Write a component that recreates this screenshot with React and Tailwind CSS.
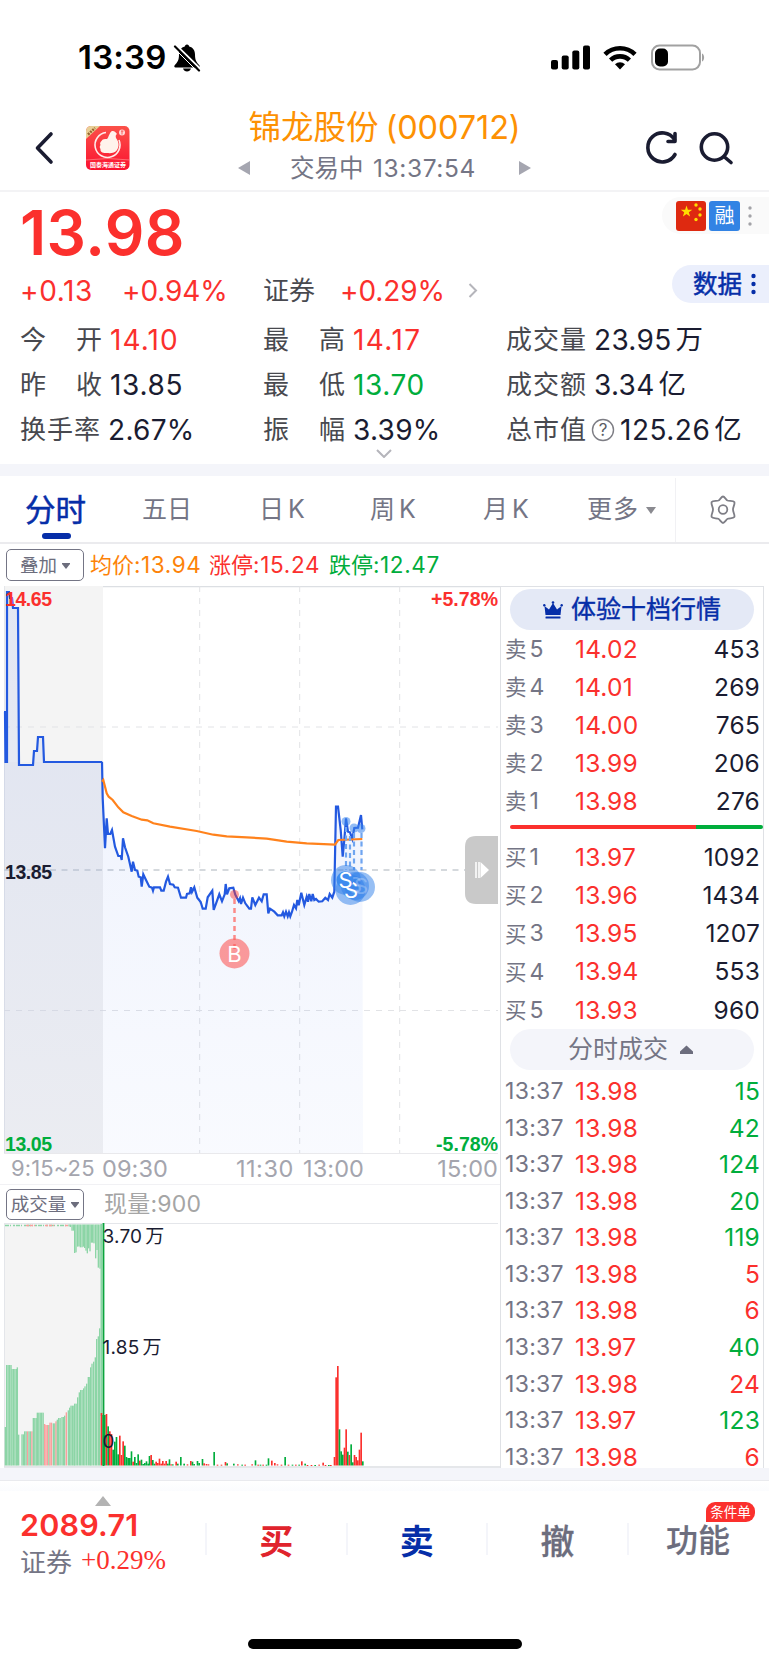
import React from 'react';

const asks = [
  ['卖', 5, '14.02', 453],
  ['卖', 4, '14.01', 269],
  ['卖', 3, '14.00', 765],
  ['卖', 2, '13.99', 206],
  ['卖', 1, '13.98', 276],
];

const bids = [
  ['买', 1, '13.97', 1092],
  ['买', 2, '13.96', 1434],
  ['买', 3, '13.95', 1207],
  ['买', 4, '13.94', 553],
  ['买', 5, '13.93', 960],
];

const trades = [
  ['13.98', 15, 'g'], ['13.98', 42, 'g'], ['13.98', 124, 'g'], ['13.98', 20, 'g'],
  ['13.98', 119, 'g'], ['13.98', 5, 'r'], ['13.98', 6, 'r'], ['13.97', 40, 'g'],
  ['13.98', 24, 'r'], ['13.97', 123, 'g'], ['13.98', 6, 'r'],
];

// price line, chart coordinates
const auctionLine = '4,126 5,126 5.5,176 7,176 7,6 9,6 10,12 12,12 13,22 18,22 19,179 33,179 34,165 37,165 38,151 43,151 44,176 102,176';

// intraday points are kept at 3x, offset from (90, 174)
const priceRaw = [
  [36, 5], [38, 115], [45, 265], [50, 175], [54, 222], [61, 222], [66, 210], [75, 260], [85, 288], [92, 288], [95, 300],
  [99, 235], [105, 262], [115, 290], [125, 335], [129, 305], [135, 330], [142, 332], [146, 350], [152, 352], [155, 380],
  [160, 343], [168, 360], [178, 380], [186, 383], [189, 392], [192, 382], [210, 382], [214, 392], [221, 392], [228, 365],
  [234, 350], [240, 372], [250, 374], [254, 382], [264, 383], [273, 413], [288, 413], [291, 402], [299, 400], [303, 382],
  [306, 396], [313, 382], [322, 413], [332, 426], [338, 446], [347, 446], [353, 412], [367, 392], [371, 450], [380, 425],
  [388, 403], [396, 424], [404, 403], [407, 372], [411, 403], [418, 385], [430, 383], [436, 404], [446, 424], [450, 415],
  [453, 432], [459, 413], [466, 430], [478, 446], [483, 446], [487, 412], [496, 435], [507, 413], [515, 424], [521, 403],
  [530, 403], [535, 460], [540, 446], [553, 455], [563, 466], [575, 466], [579, 457], [583, 469], [588, 455], [593, 469],
  [597, 457], [601, 469], [606, 455], [612, 435], [618, 445], [622, 420], [626, 436], [634, 398], [643, 435], [650, 410],
  [654, 425], [658, 402], [664, 424], [668, 402], [673, 420], [678, 417], [686, 425], [697, 424], [706, 413], [714, 420],
  [719, 402], [727, 413], [733, 395], [738, 140], [744, 140], [752, 210], [758, 290], [763, 240], [768, 175], [774, 215],
  [780, 217], [787, 237], [793, 204], [804, 203], [813, 165], [817, 208],
];

const avgRaw = [
  [36, 65], [40, 60], [50, 100], [56, 110], [68, 120], [85, 142], [100, 157], [125, 168], [155, 179], [172, 181], [190, 190],
  [240, 200], [320, 213], [370, 224], [410, 229], [470, 232], [530, 236], [590, 245], [650, 250], [735, 254], [745, 240], [817, 237],
];

const toPoints = (raw) => raw.map(([x, y]) => `${(90 + x / 3).toFixed(1)},${(174 + y / 3).toFixed(1)}`).join(' ');
const priceLine = `${auctionLine} ${toPoints(priceRaw)}`;

// auction volume: [from, to, top] at 3x
const auctionSteps = [
  [14, 18, 654], [18, 34, 468], [34, 50, 480], [50, 54, 475], [54, 58, 677], [64, 72, 676], [72, 98, 667], [98, 110, 627],
  [110, 130, 611], [132, 136, 645], [136, 148, 648], [148, 158, 641], [158, 166, 643], [166, 170, 637], [170, 174, 632],
  [174, 184, 627], [184, 192, 624], [192, 197, 620], [197, 203, 610], [203, 207, 604], [207, 211, 596], [211, 222, 590],
  [222, 231, 584], [231, 236, 565], [236, 240, 550], [240, 249, 543], [249, 253, 538], [253, 258, 532], [258, 263, 524],
  [263, 270, 504], [270, 274, 475], [274, 279, 464], [279, 284, 458], [284, 288, 445], [288, 293, 390], [293, 297, 382], [297, 302, 358],
];
const redAuction = [[78, 83], [93, 98], [132, 145], [148, 154], [166, 170], [197, 203]];

const auctionTop = [
  [205, 52], [209, 54], [214, 65], [218, 65], [222, 132], [226, 130], [231, 113], [235, 112], [239, 115], [244, 115], [248, 113],
  [252, 117], [256, 125], [260, 133], [264, 118], [268, 127], [272, 101], [276, 101], [280, 103], [285, 148], [289, 123], [293, 176], [298, 179],
];

// intraday volume: [x, top, color] at 3x
const volume = [
  [302, 612, 'r'], [307, 618, 'g'], [312, 618, 'g'], [317, 615, 'r'], [322, 652, 'g'], [327, 667, 'r'], [332, 675, 'r'], [337, 722, 'g'],
  [342, 698, 'g'], [347, 684, 'g'], [352, 736, 'g'], [357, 680, 'r'], [362, 738, 'r'], [367, 697, 'r'], [372, 710, 'g'], [377, 744, 'g'],
  [382, 747, 'g'], [387, 747, 'g'], [392, 727, 'g'], [397, 758, 'r'], [402, 744, 'g'], [407, 762, 'g'], [412, 736, 'g'], [417, 755, 'r'],
  [422, 752, 'g'], [427, 765, 'g'], [432, 762, 'g'], [437, 757, 'g'], [442, 764, 'g'], [446, 741, 'g'], [451, 738, 'r'], [456, 753, 'g'],
  [461, 764, 'g'], [466, 758, 'r'], [471, 762, 'r'], [476, 749, 'r'], [481, 764, 'r'], [486, 756, 'r'], [491, 764, 'r'], [496, 756, 'r'],
  [501, 764, 'g'], [506, 751, 'g'], [511, 766, 'r'], [516, 766, 'g'], [526, 758, 'r'], [531, 764, 'g'], [540, 744, 'g'], [550, 764, 'g'],
  [560, 766, 'r'], [570, 756, 'r'], [575, 758, 'g'], [580, 765, 'g'], [590, 756, 'g'], [595, 762, 'g'], [605, 750, 'g'], [610, 763, 'r'],
  [617, 765, 'r'], [623, 766, 'r'], [640, 729, 'g'], [650, 767, 'r'], [662, 767, 'r'], [674, 759, 'r'], [679, 763, 'g'], [699, 764, 'g'],
  [711, 766, 'r'], [724, 767, 'g'], [733, 767, 'r'], [754, 766, 'r'], [764, 754, 'g'], [772, 767, 'r'], [779, 767, 'g'], [787, 767, 'r'],
  [797, 767, 'g'], [803, 748, 'g'], [813, 755, 'r'], [822, 762, 'r'], [830, 766, 'r'], [842, 767, 'r'], [853, 744, 'g'], [863, 767, 'r'],
  [875, 767, 'g'], [885, 767, 'r'], [895, 767, 'g'], [903, 757, 'r'], [913, 764, 'g'], [920, 768, 'r'], [932, 768, 'r'], [943, 768, 'g'],
  [955, 767, 'r'], [967, 761, 'r'], [974, 768, 'r'], [984, 768, 'g'], [990, 768, 'r'], [1001, 744, 'r'], [1006, 505, 'r'], [1011, 471, 'r'],
  [1016, 661, 'g'], [1021, 727, 'g'], [1026, 737, 'g'], [1031, 716, 'r'], [1036, 661, 'r'], [1041, 728, 'g'], [1046, 738, 'r'],
  [1051, 706, 'g'], [1056, 760, 'g'], [1061, 738, 'r'], [1066, 744, 'r'], [1071, 754, 'r'], [1076, 722, 'r'], [1081, 671, 'r'], [1086, 757, 'g'],
];

const RED = '#fb302d';
const GREEN = '#00ad3c';

const auctionBars = [];
auctionSteps.forEach(([from, to, top]) => {
  for (let x = from; x < to - 2; x += 4.35) {
    const red = redAuction.some(([a, b]) => x >= a - 1 && x < b - 1);
    auctionBars.push({ x: x / 3, y: (top - 42) / 3, red });
  }
});

const StatusBar = () => (
  <div className="flex h-[100px] items-start pl-[78px] pr-[64px] pt-[44px]">
    <span className="w-[95px] text-[33px] font-semibold leading-[27px] tracking-[0.200px]">13:39</span>
    <svg className="h-[28px] w-[28px]" viewBox="0 0 28 28">
      <path d="M14 0.5c1.500 0 2 1 2.200 2 4 1 5.800 4 5.800 8 0 6 1.500 7.500 4.500 11 .6 1-.1 2-1 2H2.500c-1 0-1.500-1-1-2C4.500 18 6 16.500 6 10.500c0-4 2-7 5.800-8 .2-1 .7-2 2.200-2z" />
      <path d="M10 24.500h8c-.6 2-2.200 3-4 3s-3.400-1-4-3z" />
      <path d="M2.500 0.500L27 24.500" stroke="#fff" strokeWidth="2" />
      <path d="M2 2.500L26 26.500" stroke="#000" strokeWidth="2.200" strokeLinecap="round" />
      <path d="M0.500 3.500L24 27" stroke="#fff" strokeWidth="1" />
    </svg>
    <div className="ml-auto flex h-[27px] items-center">
      <svg className="h-[25px] w-[39px]" viewBox="0 0 39 25">
        <rect x="0" y="15" width="7" height="9.500" rx="2" />
        <rect x="10.700" y="10.500" width="7" height="14" rx="2" />
        <rect x="21.300" y="5.500" width="7" height="19" rx="2" />
        <rect x="32" y="0.500" width="7" height="24" rx="2" />
      </svg>
      <svg className="ml-[13px] h-[25px] w-[34px]" viewBox="0 0 34 25" fill="none" stroke="#000" strokeWidth="4.600">
        <path d="M2 9.300a21.500 21.500 0 0 1 30 0" />
        <path d="M7.600 15.200a13.500 13.500 0 0 1 18.800 0" />
        <path d="M17 24.500l-5-5.200a7.300 7.300 0 0 1 10 0z" fill="#000" stroke="none" />
      </svg>
      <svg className="ml-[14px] h-[27px] w-[54px]" viewBox="0 0 54 27">
        <rect x="1" y="1.500" width="48" height="24" rx="7.500" fill="none" stroke="#a1a1a1" strokeWidth="2" />
        <rect x="4" y="4.500" width="13" height="18" rx="5" />
        <path d="M51 9.500c2.800.8 2.800 7.200 0 8z" fill="#a1a1a1" />
      </svg>
    </div>
  </div>
);

const Header = () => (
  <div className="flex h-[92px] border-b-2 border-[#f3f3f5]">
    <svg className="ml-[34px] mt-[31px] h-[34px] w-[20px]" viewBox="0 0 20 34" fill="none" stroke="#1a1c31" strokeWidth="3.600" strokeLinecap="round" strokeLinejoin="round">
      <path d="M17 3L3.500 17L17 31" />
    </svg>
    <svg className="ml-[32px] mt-[26px] h-[44px] w-[44px]" viewBox="0 0 44 44">
      <defs>
        <linearGradient id="logo" x1="0" y1="0" x2="0" y2="1">
          <stop offset="0" stopColor="#fb5149" />
          <stop offset="1" stopColor="#fb1230" />
        </linearGradient>
        <clipPath id="logoClip"><rect width="43.500" height="44" rx="5" /></clipPath>
      </defs>
      <g clipPath="url(#logoClip)">
        <rect width="44" height="44" fill="url(#logo)" />
        <path d="M0 0h14L0 13z" fill="#e9cf96" />
        <path d="M2 8.500L9 2" stroke="#94632c" strokeWidth="2.500" strokeDasharray="2 1" />
        <path d="M20 6.500A12.500 12.500 0 1 0 33 14" fill="none" stroke="#ffeceb" strokeWidth="1.600" />
        <path d="M21 13c2-2 2-6 5-8 2-.5 4 1 5 3-1.500 1-1.500 2-1 4 3 4 3.500 8 1 12-2 3-6 3.500-10 3-4 .5-7-1-6.500-4-1-1-1-3 0-4-1-2 0-3 1-4 1-2 3-2 5.500-2z" fill="#fff3ec" />
        <circle cx="36" cy="6.500" r="3" fill="#ffd9d7" />
        <path d="M35 5h2.500M36 5v3.500" stroke="#f8413f" strokeWidth="0.800" />
        <path d="M0 34Q22 31 44 34" fill="none" stroke="#ff8d8d" strokeWidth="0.700" />
        <text x="22" y="41" textAnchor="middle" fontSize="6" fontWeight="700" fill="#fff" textLength="36" className="font-['Noto_Sans_CJK_SC',sans-serif]">国泰海通证券</text>
      </g>
    </svg>
    <div className="ml-[108px] w-[293px]">
      <div className="mt-[10px] flex h-[36px] items-center justify-center whitespace-pre text-[32.500px] leading-[36px] text-[#fd9103]">
        <span>锦龙股份</span><span className="ml-[7px] tracking-[-0.100px]">(000712)</span>
      </div>
      <div className="mt-[7px] flex h-[30px] items-center text-[24.500px] leading-[30px] text-[#747585]">
        <svg className="h-[14px] w-[12px]" viewBox="0 0 12 14"><path d="M12 0v14L0 7z" fill="#a5a6b0" /></svg>
        <span className="ml-[40px] w-[83px]">交易中</span>
        <span className="w-[106px] tracking-[0.600px]">13:37:54</span>
        <svg className="ml-auto h-[14px] w-[12px]" viewBox="0 0 12 14"><path d="M0 0v14L12 7z" fill="#a5a6b0" /></svg>
      </div>
    </div>
    <svg className="ml-[112px] mt-[30px] h-[36px] w-[36px]" viewBox="0 0 36 36" fill="none" stroke="#1a1c31" strokeWidth="3.600" strokeLinecap="round" strokeLinejoin="round">
      <path d="M32 24.500A14.500 14.500 0 1 1 31.500 9.500" />
      <path d="M32 3.500v8h-7" />
    </svg>
    <svg className="ml-[20px] mt-[31px] h-[36px] w-[36px]" viewBox="0 0 36 36" fill="none" stroke="#1a1c31" strokeWidth="3.600" strokeLinecap="round">
      <circle cx="15.500" cy="16" r="13.200" />
      <path d="M25.500 26L32 31.500" />
    </svg>
  </div>
);

const Stat = ({ label, value, unit, color, spacing }) => (
  <div className="flex h-[45px] items-center text-[26px] text-[#48494f]">
    <span className={`flex justify-between ${label.length === 3 ? 'w-[80px]' : 'w-[82px]'}`}>
      {label.split('').map((c) => <span key={c}>{c}</span>)}
    </span>
    <span className={`ml-[8px] text-[28px] ${spacing || 'tracking-[0.300px]'} ${color || 'text-[#1a1c31]'}`}>{value}</span>
    {unit && <span className="ml-[4px] text-[27.500px] text-[#1a1c31]">{unit}</span>}
  </div>
);

const Quote = () => (
  <div className="relative h-[272px] pl-[20px]">
    <div className="h-[80px] pt-[9px] text-[62px] font-semibold leading-[64px] tracking-[0.400px] text-[#fb302d]">13.98</div>
    <div className="flex h-[37px] items-center text-[28px] text-[#fb302d]">
      <span className="w-[102px] tracking-[0.600px]">+0.13</span>
      <span className="w-[141px] tracking-[-0.100px]">+0.94%</span>
      <span className="w-[77px] text-[26px] text-[#48494f]">证券</span>
      <span className="w-[128px] tracking-[-0.100px]">+0.29%</span>
      <svg className="h-[15px] w-[10px]" viewBox="0 0 10 15" fill="none" stroke="#b5b5bb" strokeWidth="2"><path d="M1.500 1l6.500 6.500L1.500 14" /></svg>
    </div>
    <div className="grid grid-cols-[243px_243px_auto] pt-[8px]">
      <Stat label="今开" value="14.10" color="text-[#fb302d]" spacing="tracking-[1.100px]" />
      <Stat label="最高" value="14.17" color="text-[#fb302d]" spacing="tracking-[1.400px]" />
      <Stat label="成交量" value="23.95" unit="万" />
      <Stat label="昨收" value="13.85" spacing="tracking-[0.700px]" />
      <Stat label="最低" value="13.70" color="text-[#00ad3c]" spacing="tracking-[0.600px]" />
      <Stat label="成交额" value="3.34" unit="亿" />
      <Stat label="换手率" value="2.67%" />
      <Stat label="振幅" value="3.39%" />
      <div className="flex h-[45px] items-center text-[26px] text-[#48494f]">
        <span className="w-[85px] tracking-[1px]">总市值</span>
        <svg className="h-[24px] w-[24px]" viewBox="0 0 24 24">
          <circle cx="12" cy="12" r="10.500" fill="none" stroke="#7d7d84" strokeWidth="1.400" />
          <text x="12" y="18" textAnchor="middle" fontSize="17" fill="#5b5c64">?</text>
        </svg>
        <span className="ml-[5px] text-[28px] tracking-[0.500px] text-[#1a1c31]">125.26</span>
        <span className="ml-[4px] text-[27.500px] text-[#1a1c31]">亿</span>
      </div>
    </div>
    <svg className="absolute left-[376px] top-[257px] h-[9px] w-[16px]" viewBox="0 0 16 9" fill="none" stroke="#b5b5bb" strokeWidth="2"><path d="M1 1l7 7l7-7" /></svg>
    <div className="absolute right-0 top-[5px] flex h-[37px] w-[107px] items-center rounded-l-full bg-[#fafafa] pl-[14px]">
      <svg className="h-[30px] w-[30px]" viewBox="0 0 30 30">
        <rect width="30" height="30" rx="3" fill="#de2910" />
        <path d="M10.500 4.500l1.400 4.200h4.400l-3.500 2.600 1.300 4.200-3.600-2.600-3.600 2.600 1.300-4.200-3.500-2.600h4.400z" fill="#ffde00" />
        <g fill="#ffde00"><circle cx="20" cy="4" r="1.700" /><circle cx="24" cy="8" r="1.700" /><circle cx="24" cy="14" r="1.700" /><circle cx="20" cy="18.500" r="1.700" /></g>
      </svg>
      <span className="ml-[3px] flex h-[30px] w-[31px] items-center justify-center rounded-[3px] bg-[#3283e4] text-[20px] text-white">融</span>
      <svg className="ml-[8px] h-[22px] w-[4px]" viewBox="0 0 4 22" fill="#a3a3a8"><circle cx="2" cy="3" r="1.700" /><circle cx="2" cy="11" r="1.700" /><circle cx="2" cy="19" r="1.700" /></svg>
    </div>
    <div className="absolute right-0 top-[73px] flex h-[38px] w-[97px] items-center rounded-l-full bg-[#ebeffc] pl-[21px] text-[24.500px] text-[#062ea8] [-webkit-text-stroke:0.500px]">
      数据
      <svg className="ml-[9px] h-[22px] w-[5px]" viewBox="0 0 5 22"><g fill="#062ea8"><circle cx="2.500" cy="3" r="2.200" /><circle cx="2.500" cy="11" r="2.200" /><circle cx="2.500" cy="19" r="2.200" /></g></svg>
    </div>
  </div>
);

const Tabs = () => (
  <div className="flex h-[68px] items-center border-b-2 border-[#ebebee] pt-[2px] text-[25px] text-[#747585]">
    <div className="relative ml-[25px] w-[117px] text-[30.500px] text-[#062ea8] [-webkit-text-stroke:0.500px]">
      分时
      <span className="absolute -bottom-[6px] left-[17px] h-[6px] w-[29px] rounded-full bg-[#062ea8]" />
    </div>
    <span className="w-[117px]">五日</span>
    <span className="w-[111px]">日<span className="ml-[4px]">K</span></span>
    <span className="w-[113px]">周<span className="ml-[4px]">K</span></span>
    <span className="w-[104px]">月<span className="ml-[4px]">K</span></span>
    <span className="w-[59px] tracking-[1px]">更多</span>
    <svg className="h-[7px] w-[10px]" viewBox="0 0 10 7"><path d="M0 0h10L5 7z" fill="#8a8a90" /></svg>
    <div className="ml-[19px] h-full w-px bg-[#f1f1f4]" />
    <svg className="ml-[32px] h-[30px] w-[30px]" viewBox="0 0 30 30" fill="none" stroke="#7e7e86" strokeWidth="1.800" strokeLinejoin="round">
      <path d="M15 1.500c1.500 0 3 3.200 4.500 4 1.600.8 5.800 0 6.800 1.600 1 1.600-1.300 4.700-1.300 7.400s2.300 6 1.300 7.600c-1 1.600-5 .9-6.600 1.700-1.600.8-3.200 4.200-4.700 4.200s-3.100-3.400-4.700-4.200c-1.600-.8-5.600-.1-6.600-1.700-1-1.600 1.300-4.900 1.300-7.600s-2.300-5.800-1.300-7.400c1-1.600 5.200-.8 6.800-1.600 1.500-.8 3-4 4.500-4z" />
      <circle cx="15" cy="14.500" r="4.300" />
    </svg>
  </div>
);

const PriceChart = () => (
  <svg className="block h-[568px] w-[500px]" viewBox="0 0 500 568">
    <defs>
      <linearGradient id="area" x1="0" y1="0" x2="0" y2="1">
        <stop offset="0" stopColor="#2a5ce6" stopOpacity="0.090" />
        <stop offset="1" stopColor="#2a5ce6" stopOpacity="0.030" />
      </linearGradient>
    </defs>
    <rect x="4" y="0" width="99" height="567" fill="#f4f4f4" />
    <path d="M103 0.500H500" stroke="#dcdfe3" strokeWidth="1.500" />
    <path d="M4.500 0V568" stroke="#e4e6ea" />
    <path d="M4 567.500H498" stroke="#e9e9ec" />
    <g stroke="#e2e3e6" strokeDasharray="6 6">
      <path d="M199.700 0V567M299.700 0V567M399.700 0V567M4 141H498M4 424.500H498" />
    </g>
    <path d="M4 284H498" stroke="#d5d9dd" strokeWidth="2" strokeDasharray="6 5.500" />
    <polygon points={`${priceLine} 363,567 4,567`} fill="url(#area)" />
    <rect x="4" y="176" width="99" height="391" fill="#2a4a9a" opacity="0.015" />
    <polyline points={priceLine} fill="none" stroke="#2359e0" strokeWidth="2.200" />
    <polyline points={toPoints(avgRaw)} fill="none" stroke="#ff821c" strokeWidth="2.200" />

    <g className="font-['Liberation_Sans',sans-serif]" fontSize="19.500" fontWeight="700">
      <text x="5" y="19.500" fill={RED} textLength="47">14.65</text>
      <text x="498" y="19.500" fill={RED} textAnchor="end" textLength="67">+5.78%</text>
      <text x="5" y="293" fill="#1a1c31" textLength="47">13.85</text>
      <text x="5" y="564.500" fill={GREEN} textLength="47">13.05</text>
      <text x="498" y="564.500" fill={GREEN} textAnchor="end" textLength="62">-5.78%</text>
    </g>

    <circle cx="234.500" cy="308.500" r="4.500" fill="#fb302d" opacity="0.450" />
    <path d="M234.500 313V366" stroke="#fb8a88" strokeWidth="2.500" strokeDasharray="5 4" />
    <circle cx="234.500" cy="367.500" r="15" fill="#fb5a58" opacity="0.600" />
    <text x="234.500" y="375.500" fill="#fff" fontSize="22" textAnchor="middle">B</text>

    <g fill="#3a86ee" opacity="0.550">
      <circle cx="346" cy="235.500" r="4.500" />
      <circle cx="354" cy="242" r="4.500" />
      <circle cx="361" cy="242.500" r="4.500" />
    </g>
    <path d="M346 241V284M350 250V284M354 247V284M361.500 247V284" stroke="#6fa5f0" strokeWidth="2.200" strokeDasharray="5 3.500" />
    <g fill="#2f7fe9" fillOpacity="0.500">
      <circle cx="346" cy="294" r="15" />
      <circle cx="350.500" cy="304" r="15" />
      <circle cx="355" cy="300" r="14" />
      <circle cx="360" cy="301" r="15" />
    </g>
    <g fill="#fff" fontSize="22" textAnchor="middle">
      <text x="355" y="307" opacity="0.250">S</text>
      <text x="361" y="308" opacity="0.250">S</text>
      <text x="351" y="312">S</text>
    </g>
    <circle cx="345" cy="294" r="8.500" fill="#3d8bee" />
    <text x="345.500" y="302" fill="#fff" fontSize="22" textAnchor="middle">S</text>

    <path d="M498 250H476q-11 0-11 11v46q0 11 11 11h22z" fill="#c9c9c9" />
    <path d="M476 276v16M479 276v16" stroke="#fff" strokeWidth="1.500" />
    <path d="M480.500 276L489 284L480.500 292z" fill="#fff" />
  </svg>
);

const VolumeChart = () => (
  <svg className="block h-[245px] w-[500px]" viewBox="0 0 500 245">
    <rect x="4" y="1" width="98" height="243" fill="#f4f4f4" />
    <path d="M4 0.500H498" stroke="#e4e6ea" />
    <path d="M4.500 0V244" stroke="#e4e6ea" />
    <path d="M4 244H500" stroke="#dcdfe3" strokeWidth="1.500" />
    {auctionBars.map((b, i) => (
      <rect key={i} x={b.x} y={b.y} width="1.350" height={242.500 - b.y} fill={b.red ? '#fa9f9d' : '#8cd5a6'} />
    ))}
    <path d="M5 2.500H68" stroke="#8cd5a6" strokeWidth="1.500" strokeDasharray="4 1 1 2 2 1" />
    <path d="M26 2.500H35M45 2.500H54M65 2.500h3" stroke="#fa9f9d" strokeWidth="1.500" strokeDasharray="3 1" />
    {auctionTop.map(([x, y]) => (
      <rect key={x} x={x / 3} y="1.500" width="1.350" height={(y - 42) / 3 - 1.500} fill="#8cd5a6" />
    ))}
    <rect x="100.500" y="1" width="1.800" height="192" fill="#8cd5a6" />
    <path d="M103.500 0V243" stroke="#0aa43c" strokeWidth="1.800" />
    {volume.map(([x, y, c]) => (
      <rect key={x} x={x / 3} y={(y - 42) / 3} width="1.650" height={Math.max(242.500 - (y - 42) / 3, 1)} fill={c === 'r' ? RED : GREEN} />
    ))}
    <g fill="#1a1c31" fontSize="19" letterSpacing="0.200">
      <text x="102.500" y="19.500">3.70<tspan dx="3">万</tspan></text>
      <text x="102.500" y="130.500">1.85<tspan dx="3">万</tspan></text>
      <text x="102.500" y="224.500">0</text>
    </g>
  </svg>
);

const Level = ({ row }) => (
  <div className="flex h-[38.100px] items-center pl-[4px] pr-[3px] text-[24.500px]">
    <span className="flex w-[70px] items-center text-[#747585]">
      <span className="text-[21.500px]">{row[0]}</span>
      <span className="ml-[3px] text-[23px]">{row[1]}</span>
    </span>
    <span className="tracking-[0.200px] text-[#fb302d]">{row[2]}</span>
    <span className="ml-auto tracking-[0.200px] text-[#1a1c31]">{row[3]}</span>
  </div>
);

const OrderBook = () => (
  <div className="h-[882px] w-[264px] border-x border-t border-[#dfe1e5]">
    <div className="ml-[9px] mt-[2px] flex h-[41px] w-[244px] items-center rounded-full bg-[#e4e9f6] pl-[33px] pt-[1px] text-[25px] text-[#062ea8] [-webkit-text-stroke:0.400px]">
      <svg className="mr-[8px] h-[18px] w-[20px]" viewBox="0 0 20 18" fill="#062ea8">
        <path d="M2.500 14L1.500 5l4.500 3.500L10 2l4 6.500L18.500 5l-1 9z" />
        <rect x="2.500" y="15.500" width="15" height="2" rx="0.500" />
        <circle cx="10" cy="1.500" r="1.300" /><circle cx="1.300" cy="4.300" r="1.200" /><circle cx="18.700" cy="4.300" r="1.200" />
      </svg>
      体验十档行情
    </div>
    <div>{asks.map((r) => <Level key={r[1]} row={r} />)}</div>
    <div className="ml-[9px] mt-[5px] flex h-[4px] w-[253px] overflow-hidden rounded-full">
      <span className="w-[186px] bg-[#fb302d]" />
      <span className="flex-1 bg-[#00ad3c]" />
    </div>
    <div className="mt-[9px]">{bids.map((r) => <Level key={r[1]} row={r} />)}</div>
    <div className="ml-[9px] flex h-[41px] w-[244px] items-center rounded-full bg-[#f4f5fa] pl-[58px] pt-[1px] text-[25px] text-[#747585]">
      分时成交
      <svg className="ml-[11px] h-[10px] w-[15px]" viewBox="0 0 15 10"><path d="M7.500 0.500L14 6.500v2.500H1V6.500z" fill="#6c6d7d" /></svg>
    </div>
    <div className="mt-[3px]">
      {trades.map((t, i) => (
        <div key={i} className="flex h-[36.550px] items-center pl-[4px] pr-[3px] text-[24.500px] leading-[30px]">
          <span className="w-[70px] text-[23px] tracking-[0.300px] text-[#747585]">13:37</span>
          <span className="tracking-[0.300px] text-[#fb302d]">{t[0]}</span>
          <span className={`ml-auto tracking-[0.200px] ${t[2] === 'g' ? 'text-[#00ad3c]' : 'text-[#fb302d]'}`}>{t[1]}</span>
        </div>
      ))}
    </div>
  </div>
);

const Caret = () => (
  <svg className="h-[6px] w-[8px]" viewBox="0 0 8 6"><path d="M0 0h8v1L4 6L0 1z" fill="#6c6d7d" /></svg>
);

const Divider = () => <div className="mt-[32px] h-[32px] w-[2px] bg-[#f4f5fa]" />;

const BottomBar = () => (
  <div className="h-[185px] border-t border-[#e9eaee] bg-white">
    <div className="h-[10px] bg-gradient-to-b from-white to-[#fbfcfe]" />
    <div className="flex h-[90px]">
      <div className="w-[205px] pl-[20px] pt-[5px]">
        <svg className="ml-[75px] h-[10px] w-[16px]" viewBox="0 0 16 10"><path d="M8 0l8 10H0z" fill="#b3b3b3" /></svg>
        <div className="mt-[4px] text-[30.500px] font-semibold leading-[30px] tracking-[0.200px] text-[#fb302d]">2089.71</div>
        <div className="mt-[6px] flex h-[32px] items-center text-[26px] text-[#747585]">
          证券<span className="mb-[4px] ml-[9px] font-['Liberation_Serif',serif] text-[27px] leading-[28px] text-[#fb302d]">+0.29%</span>
        </div>
      </div>
      <Divider />
      <div className="mt-[17px] flex h-[66px] w-[138.500px] items-center justify-center text-[34px] font-bold text-[#e0232c]">买</div>
      <Divider />
      <div className="mt-[17px] flex h-[66px] w-[138.500px] items-center justify-center text-[34px] font-bold text-[#062ea8]">卖</div>
      <Divider />
      <div className="mt-[17px] flex h-[66px] w-[139px] items-center justify-center text-[34px] font-medium text-[#6c6d7d] [-webkit-text-stroke:0.300px]">撤</div>
      <Divider />
      <div className="relative mt-[17px] flex h-[66px] w-[138px] items-center justify-center text-[32px] font-medium text-[#6c6d7d] [-webkit-text-stroke:0.200px]">
        功能
        <span className="absolute left-[77px] top-[-6px] flex h-[20px] w-[49px] items-center justify-center rounded-[9px] rounded-bl-none bg-[#fb302d] text-[13.500px] font-normal text-white [-webkit-text-stroke:0]">条件单</span>
      </div>
    </div>
    <div className="mx-auto mt-[58px] h-[10px] w-[274px] rounded-full bg-black" />
  </div>
);

const App = () => (
  <div className="h-[1665px] w-[769px] overflow-hidden bg-white font-['Inter','Noto_Sans_CJK_SC',sans-serif]">
    <StatusBar />
    <Header />
    <Quote />
    <div className="h-[12px] bg-[#f4f5fa]" />
    <Tabs />
    <div className="flex h-[42px] items-center pl-[6px] text-[22px]">
      <div className="mr-[6px] flex h-[32px] w-[78px] items-center justify-center gap-[5px] rounded-[5px] border-[1.500px] border-[#747585] pt-[1px] text-[18.500px] text-[#6c6d7d]">
        叠加 <Caret />
      </div>
      <span className="w-[119px] text-[#fd8208]">均价<span className="text-[22.500px] tracking-[0.600px]">:13.94</span></span>
      <span className="w-[120px] text-[#fb302d]">涨停<span className="text-[22.500px] tracking-[0.700px]">:15.24</span></span>
      <span className="text-[#00ad3c]">跌停<span className="text-[22.500px] tracking-[0.600px]">:12.47</span></span>
    </div>
    <div className="flex h-[882px]">
      <div className="w-[500px]">
        <PriceChart />
        <div className="flex h-[31px] items-center border-b border-[#f1f1f4] pb-[1px] pl-[11px] pr-[2px] text-[23.500px] tracking-[0.100px] text-[#a4a5ae]">
          <span className="w-[91px] whitespace-nowrap text-[22px]">9:15~25</span>
          <span className="w-[134px]">09:30</span>
          <span className="w-[67px] tracking-[0.500px]">11:30</span>
          <span>13:00</span>
          <span className="ml-auto">15:00</span>
        </div>
        <div className="flex h-[38px] items-center pl-[6px] pt-[1px] text-[23px] text-[#a5a5a5]">
          <div className="flex h-[31px] w-[78px] items-center justify-center gap-[5px] rounded-[5px] border-[1.500px] border-[#747585] text-[18.500px] text-[#6c6d7d]">
            成交量<Caret />
          </div>
          <span className="ml-[20px] tracking-[0.200px]">现量:900</span>
        </div>
        <VolumeChart />
      </div>
      <OrderBook />
    </div>
    <div className="h-[12px] bg-[#f4f5fa]" />
    <BottomBar />
  </div>
);

export default App;
